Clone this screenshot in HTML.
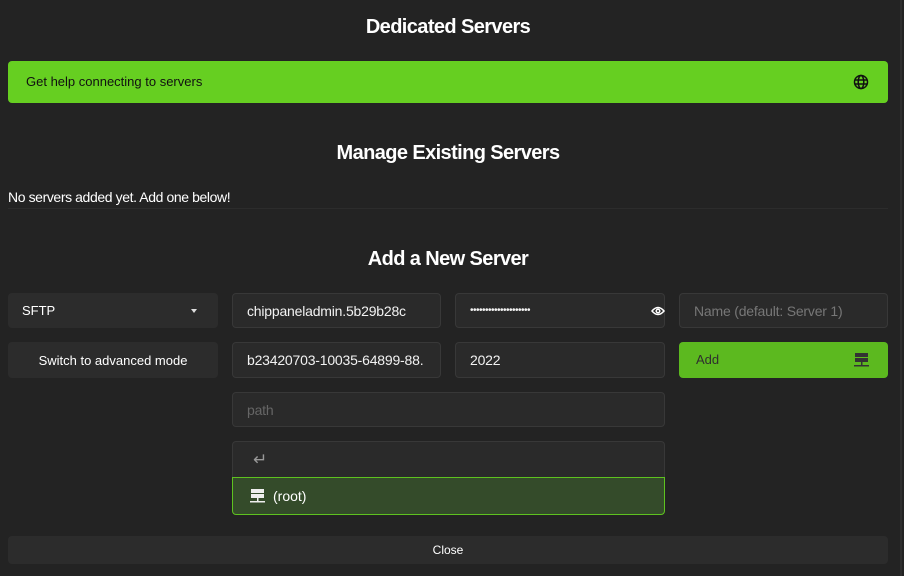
<!DOCTYPE html>
<html><head><style>
*{box-sizing:border-box;margin:0;padding:0}
body{width:904px;height:576px;background:#232323;font-family:"Liberation Sans",sans-serif;color:#fff;position:relative;overflow:hidden}
.a{position:absolute}
h{position:absolute;left:0;width:896px;text-align:center;font-weight:bold;font-size:20px;letter-spacing:-0.6px}
.f{position:absolute;background:#2a2a2a;border:1px solid #383838;border-radius:4px;font-size:14px;padding-left:14px;display:flex;align-items:center;color:#f2f2f2;letter-spacing:-0.2px}
.b{position:absolute;background:#2c2c2c;border-radius:4px;font-size:13px;display:flex;align-items:center}
</style></head><body>
<div class="a" style="left:900px;top:0;width:2px;height:576px;background:#2e2e2e"></div>
<h style="top:16px">Dedicated Servers</h>
<div class="a" style="left:8px;top:61px;width:880px;height:42px;background:#66cf21;border-radius:4px;color:#111;font-size:13px;padding-left:18px;line-height:42px">Get help connecting to servers
<svg class="a" style="left:845px;top:13px" width="16" height="16" viewBox="0 0 16 16" fill="none" stroke="#111" stroke-width="1.5"><circle cx="8" cy="8" r="6.5"/><ellipse cx="8" cy="8" rx="2.8" ry="6.5"/><path d="M1.5 6h13M1.5 10h13"/></svg></div>
<h style="top:142px">Manage Existing Servers</h>
<div class="a" style="left:8px;top:189px;font-size:14px;letter-spacing:-0.4px">No servers added yet. Add one below!</div>
<div class="a" style="left:8px;top:208px;width:880px;height:1px;background:#2c2c2c"></div>
<h style="top:248px">Add a New Server</h>
<div class="b" style="left:8px;top:293px;width:210px;height:35px;padding-left:14px;font-size:13px">SFTP<span class="a" style="left:183px;top:16px;border:3px solid transparent;border-top:4px solid #ddd"></span></div>
<div class="b" style="left:8px;top:342px;width:210px;height:36px;justify-content:center">Switch to advanced mode</div>
<div class="f" style="left:232px;top:293px;width:209px;height:35px">chippaneladmin.5b29b28c</div>
<div class="f" style="left:232px;top:342px;width:209px;height:36px;overflow:hidden;white-space:nowrap">b23420703-10035-64899-88.</div>
<div class="f" style="left:455px;top:293px;width:210px;height:35px;font-size:10px;letter-spacing:-0.5px">••••••••••••••••••••
<svg class="a" style="left:195px;top:11px" width="14" height="12" viewBox="0 0 14 12" fill="none" stroke="#fff" stroke-width="1.5"><path d="M1 6Q7 -1 13 6Q7 13 1 6Z"/><circle cx="7" cy="6" r="1.8"/></svg></div>
<div class="f" style="left:455px;top:342px;width:210px;height:36px">2022</div>
<div class="f" style="left:679px;top:293px;width:209px;height:35px;color:#777">Name (default: Server 1)</div>
<div class="a" style="left:679px;top:342px;width:209px;height:36px;background:#5cb91f;border-radius:4px;color:#2f2f2f;font-size:13px;padding-left:17px;line-height:36px">Add
<svg class="a" style="left:175px;top:11px" width="15" height="15" viewBox="0 0 15 15" fill="#333"><rect x="1" y="0" width="13" height="4"/><rect x="1" y="5" width="13" height="4"/><rect x="7" y="9" width="1.5" height="3"/><rect x="0" y="12" width="15" height="1.5"/></svg></div>
<div class="f" style="left:232px;top:392px;width:433px;height:35px;color:#666">path</div>
<div class="a" style="left:232px;top:441px;width:433px;height:36px;background:#2a2a2a;border:1px solid #383838;border-bottom:none;border-radius:4px 4px 0 0;color:#999;font-size:17px;padding-left:20px;line-height:36px">↵</div>
<div class="a" style="left:232px;top:477px;width:433px;height:38px;background:#344b2a;border:1px solid #5ec21f;border-radius:0 0 4px 4px;font-size:14px;padding-left:40px;line-height:36px">(root)
<svg class="a" style="left:17px;top:11px" width="15" height="15" viewBox="0 0 15 15" fill="#eee"><rect x="1" y="0" width="13" height="4"/><rect x="1" y="5" width="13" height="4"/><rect x="7" y="9" width="1.5" height="3"/><rect x="0" y="12" width="15" height="1.5"/></svg></div>
<div class="b" style="left:8px;top:536px;width:880px;height:28px;justify-content:center;font-size:12px">Close</div>
</body></html>
